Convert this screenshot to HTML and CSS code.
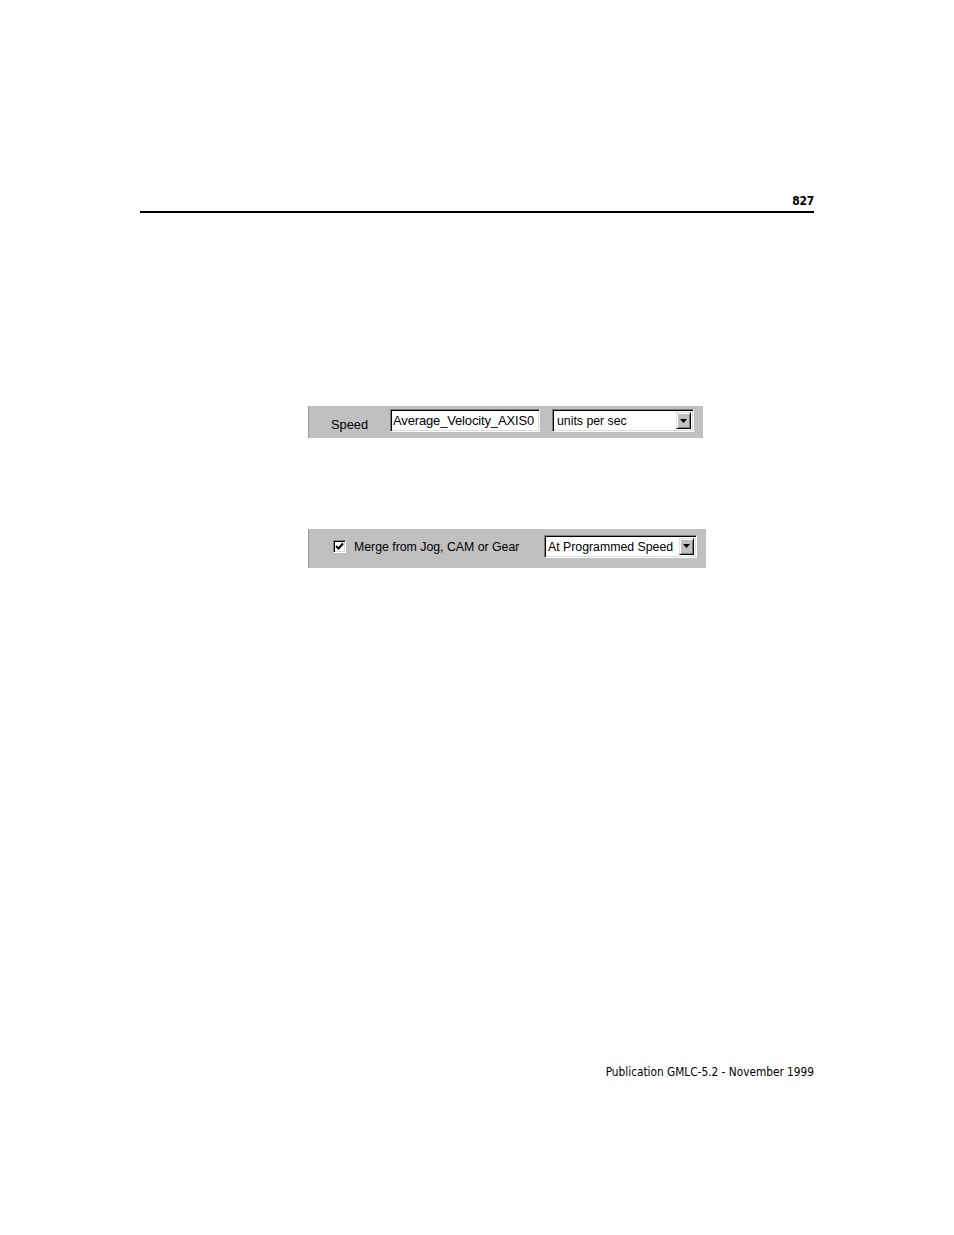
FILE: index.html
```html
<!DOCTYPE html>
<html>
<head>
<meta charset="utf-8">
<link rel="stylesheet" href="styles.css">
</head>
<body>
<div class="page">
  <header class="header">
    <div class="pagenum">827</div>
    <div class="rule"></div>
  </header>

  <div class="panel panel-speed">
    <span class="label speed-label">Speed</span>
    <div class="field field-speed"><span>Average_Velocity_AXIS0</span></div>
    <div class="combo combo-units">
      <span class="combo-text">units per sec</span>
      <span class="combo-btn"><svg width="7" height="4" viewBox="0 0 7 4"><path d="M0 0H7L3.5 4Z" fill="#000"/></svg></span>
    </div>
  </div>

  <div class="panel panel-merge">
    <span class="check"><svg width="9" height="9" viewBox="0 0 9 9"><path d="M1 4 L3.5 6.5 L8 1.5" fill="none" stroke="#000" stroke-width="2"/></svg></span>
    <span class="label merge-label">Merge from Jog, CAM or Gear</span>
    <div class="combo combo-merge">
      <span class="combo-text">At Programmed Speed</span>
      <span class="combo-btn"><svg width="7" height="4" viewBox="0 0 7 4"><path d="M0 0H7L3.5 4Z" fill="#000"/></svg></span>
    </div>
  </div>

  <footer class="footer">Publication GMLC-5.2 - November 1999</footer>
</div>
</body>
</html>
```

FILE: styles.css
```css
html, body {
  margin: 0;
  padding: 0;
  background: #fff;
}
.page {
  position: relative;
  width: 954px;
  height: 1235px;
  font-family: "DejaVu Sans Condensed", "Liberation Sans", sans-serif;
}
.header {
  padding-top: 193px;
  margin-left: 140px;
  width: 674px;
}
.pagenum {
  text-align: right;
  font-weight: bold;
  font-size: 12px;
  line-height: 16px;
  letter-spacing: -0.3px;
  color: #000;
}
.rule {
  margin-top: 2px;
  height: 2px;
  background: #000;
}
.panel {
  margin-left: 308px;
  background: #c0c0c0;
  border-left: 1px solid #9a9a9a;
  display: flex;
  align-items: center;
  box-sizing: border-box;
  font-family: "Liberation Sans", Arial, sans-serif;
  font-size: 12.3px;
  color: #000;
}
.panel-speed {
  margin-top: 193px;
  width: 395px;
  height: 32px;
}
.panel-merge {
  margin-top: 91px;
  width: 398px;
  height: 39px;
}
.speed-label {
  margin-left: 22px;
  margin-top: 4px;
  width: 59px;
  font-size: 12.8px;
}
.field, .combo {
  background: #fff;
  box-sizing: border-box;
  height: 23px;
  border-top: 1px solid #808080;
  border-left: 1px solid #808080;
  border-right: 1px solid #fff;
  border-bottom: 1px solid #fff;
  box-shadow: inset 1px 1px 0 #000, inset -1px -1px 0 #dcdcdc;
  display: flex;
  align-items: center;
}
.field-speed {
  width: 150px;
  padding-left: 2px;
  margin-top: -3px;
  font-size: 13px;
  letter-spacing: -0.15px;
}
.combo {
  position: relative;
  padding-left: 4px;
}
.combo-units {
  margin-left: 12px;
  width: 142px;
  margin-top: -3px;
}
.combo-text {
  flex: 1;
  white-space: nowrap;
  padding-top: 1px;
}
.combo-btn {
  width: 15px;
  height: 17px;
  margin-right: 2px;
  box-sizing: border-box;
  background: #c0c0c0;
  border-top: 1px solid #dfdfdf;
  border-left: 1px solid #dfdfdf;
  border-right: 1px solid #000;
  border-bottom: 1px solid #000;
  box-shadow: inset 1px 1px 0 #fff, inset -1px -1px 0 #808080;
  display: flex;
  align-items: center;
  justify-content: center;
}
.check {
  margin-left: 24px;
  margin-top: -5px;
  width: 13px;
  height: 13px;
  box-sizing: border-box;
  background: #fff;
  border-top: 1px solid #808080;
  border-left: 1px solid #808080;
  border-right: 1px solid #fff;
  border-bottom: 1px solid #fff;
  box-shadow: inset 1px 1px 0 #000, inset -1px -1px 0 #dcdcdc;
  display: flex;
  align-items: center;
  justify-content: center;
}
.merge-label {
  margin-left: 8px;
  margin-top: -4px;
  width: 190px;
  white-space: nowrap;
}
.combo-merge {
  width: 153px;
  margin-top: -5px;
  padding-left: 3px;
}
.footer {
  position: absolute;
  left: 0;
  top: 1064px;
  width: 814px;
  text-align: right;
  font-size: 11.75px;
  line-height: 16px;
  color: #000;
}
```
